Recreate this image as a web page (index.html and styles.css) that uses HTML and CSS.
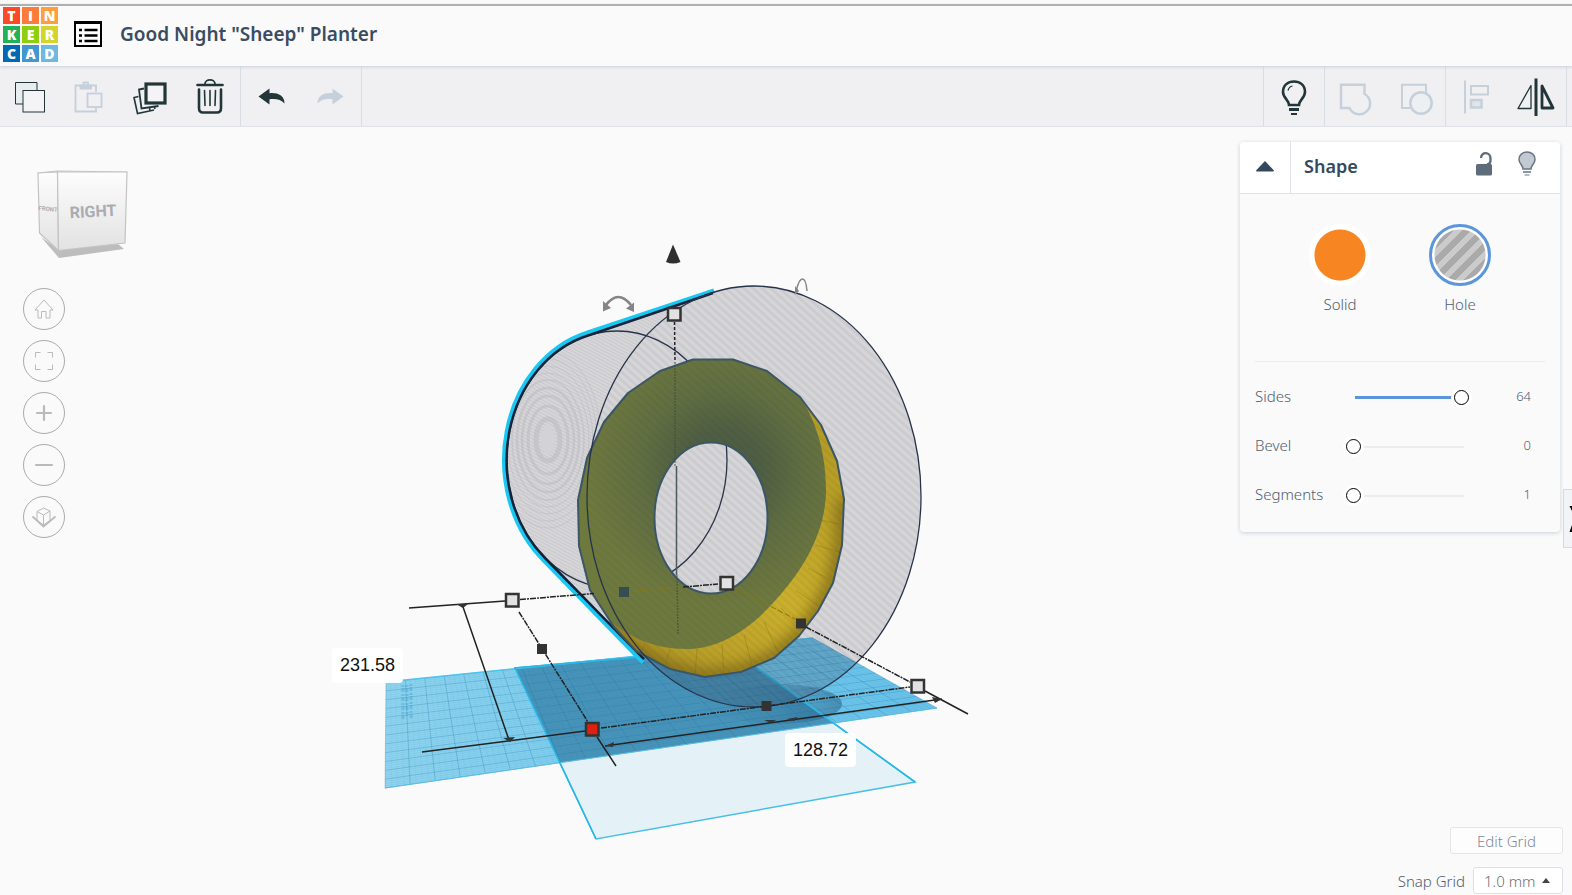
FILE: index.html
```html
<!DOCTYPE html>
<html lang="en">
<head>
<meta charset="utf-8">
<title>Good Night "Sheep" Planter</title>
<link rel="stylesheet" href="styles.css">
</head>
<body>
<header class="header">
  <a class="logo" href="#" aria-label="Tinkercad">
    <span class="tile t1">T</span><span class="tile t2">I</span><span class="tile t3">N</span>
    <span class="tile t4">K</span><span class="tile t5">E</span><span class="tile t6">R</span>
    <span class="tile t7">C</span><span class="tile t8">A</span><span class="tile t9">D</span>
  </a>
  <button class="plain list-button" aria-label="Designs">
    <svg width="28" height="26" viewBox="0 0 28 26"><rect x="1" y="1" width="26" height="24" fill="#fff" stroke="#000" stroke-width="2"/><path d="M0 1.5h28" stroke="#000" stroke-width="3"/><path d="M5 9h3M5 14.500h3M5 20h3M10.500 9h13M10.500 14.500h13M10.500 20h13" stroke="#000" stroke-width="2.500"/></svg>
  </button>
  <h1 class="title">Good Night "Sheep" Planter</h1>
</header>

<nav class="toolbar" aria-label="Tools">
  <div class="group">
    <button class="plain tool" aria-label="Copy"><svg viewBox="0 0 60 60"><path d="M23 36H15.500V14.500H37V22.500" fill="#e8edf0"/><rect x="23" y="22.500" width="21.500" height="21.500" fill="#f4f4f6"/></svg></button>
    <button class="plain tool off" aria-label="Paste"><svg viewBox="0 0 60 60" stroke-width="1.800"><path d="M36 24V17.500H15.500V43.500H36V39"/><path d="M20.500 17.500h10.500v3h-10.500z" fill="#c5d0da"/><rect x="23.500" y="14.500" width="4.500" height="4"/><rect x="27.500" y="25.500" width="14" height="13.500" fill="#f0f0f3"/></svg></button>
    <button class="plain tool" aria-label="Duplicate"><svg viewBox="0 0 60 60"><rect x="26" y="16" width="19" height="19" stroke-width="3.200" fill="#f4f4f6"/><path d="M24 20.500L19 21.500L21.500 40.500L38.500 38" stroke-width="1.800"/><path d="M18.500 28.500L14 29.500L17.500 45.500L34 42M35 41l-.5-2M30 43l-.5-3" stroke-width="1.600"/></svg></button>
    <button class="plain tool" aria-label="Delete"><svg viewBox="0 0 60 60" stroke-width="2.200" stroke-linecap="round"><path d="M17.500 17H42.500" stroke-width="2.600"/><path d="M25 16C25 10.500 35 10.500 35 16" stroke-width="1.800"/><path d="M19 21.500V40Q19 44.500 23 44.500H37Q41 44.500 41 40V21.500" stroke-width="2.600"/><path d="M24.500 22.500L25 37.500M30 22.500V37.500M35.500 22.500L35 37.500" stroke-width="1.600"/></svg></button>
  </div>
  <div class="group">
    <button class="plain tool" aria-label="Undo"><svg viewBox="0 0 60 60"><path d="M17.500 28.500L28.500 20.500V25.200C37 24.500 43.500 27.500 43.500 35.500C40 31.500 35 30.500 28.500 31.300V36.500Z" fill="#223538" stroke="none"/></svg></button>
    <button class="plain tool off" aria-label="Redo"><svg viewBox="0 0 60 60"><path d="M42.500 28.500L31.500 20.500V25.200C23 24.500 16.500 27.500 16.500 35.500C20 31.500 25 30.500 31.500 31.300V36.500Z" fill="#c5d0da" stroke="none"/></svg></button>
  </div>
  <div class="spacer"></div>
  <div class="group">
    <button class="plain tool" aria-label="Show all"><svg viewBox="0 0 60 60"><path d="M25 37C25 32 19 30 19 24C19 17 24 13.500 30 13.500S41 17 41 24C41 30 35 32 35 37Z" stroke-width="2.600"/><path d="M24 22.500Q25 18.500 28.500 18" stroke-width="1.200"/><path d="M25 41.500H35" stroke-width="3"/><path d="M27 46H33" stroke-width="2"/></svg></button>
  </div>
  <div class="group">
    <button class="plain tool off" aria-label="Group"><svg viewBox="0 0 60 60"><path d="M16 16.800H39.500V26A10.800 10.800 0 1 1 24.500 40H16Z" stroke-width="2.500"/></svg></button>
    <button class="plain tool off" aria-label="Ungroup"><svg viewBox="0 0 60 60"><path d="M25 40H17V16.800H41V25" stroke-width="2"/><circle cx="36" cy="35" r="10.700" stroke-width="2.500" fill="#edf0f3"/></svg></button>
  </div>
  <div class="group">
    <button class="plain tool off" aria-label="Align"><svg viewBox="0 0 60 60" stroke-width="2"><path d="M19 12.500V45.500"/><rect x="25" y="18" width="17" height="8.500"/><rect x="25" y="32" width="10.500" height="7.500" fill="#dfe5ea" stroke-width="2.500"/></svg></button>
    <button class="plain tool" aria-label="Mirror"><svg viewBox="0 0 60 60" stroke-linejoin="round"><path d="M30 10.500V48" stroke-width="3"/><path d="M25 17.500V40.500H12Z" stroke-width="1.300"/><path d="M36 18V40H47Z" stroke-width="2.800"/></svg></button>
  </div>
</nav>

<main class="workspace">
  <svg class="scene" viewBox="0 127 1572 768" preserveAspectRatio="xMidYMin meet">
    <defs>
      <pattern id="hatch" width="6" height="6" patternUnits="userSpaceOnUse" patternTransform="rotate(-48)"><rect width="3" height="6" fill="#30303c" opacity=".06"/></pattern>
      <pattern id="fine" width="3" height="3" patternUnits="userSpaceOnUse" patternTransform="rotate(-62)"><rect width="1" height="3" fill="#30303c" opacity=".08"/></pattern>
      <linearGradient id="sea" x1="0" x2="1"><stop offset="0" stop-color="#8fd4ef"/><stop offset=".5" stop-color="#76cbed"/><stop offset="1" stop-color="#69c3ea"/></linearGradient>
      <linearGradient id="shade"><stop offset="0" stop-color="#22577c" stop-opacity="0"/><stop offset=".5" stop-color="#22577c" stop-opacity=".15"/><stop offset="1" stop-color="#22577c" stop-opacity=".5"/></linearGradient>
      <radialGradient id="olive" gradientUnits="userSpaceOnUse" cx="722" cy="470" r="135"><stop offset="0" stop-color="#4a5a42"/><stop offset=".3" stop-color="#4f5f42"/><stop offset=".6" stop-color="#606e41"/><stop offset="1" stop-color="#6e793e"/></radialGradient>
      <linearGradient id="gold" gradientUnits="userSpaceOnUse" x1="830" y1="450" x2="640" y2="670"><stop offset="0" stop-color="#b59c25"/><stop offset=".5" stop-color="#ccb02b"/><stop offset="1" stop-color="#b09625"/></linearGradient>
      <linearGradient id="cube" x2="0" y2="1"><stop offset="0" stop-color="#fdfdfd"/><stop offset="1" stop-color="#e2e2e2"/></linearGradient>
      <clipPath id="plane"><path d="M386 682L813 638L937 708L385 788Z"/></clipPath>
      <clipPath id="ring"><path d="M693 359.500L733 359.500L767 371L800 397L821 425L837 461L844 499L842 545L833 583L818 611L799 636L774 658L741 672L705 677L670 669L636 651L614 627L590 590L579 546L578 500L587 458L604 422L628 393L660 371Z"/></clipPath>
      <clipPath id="barrel"><path d="M713 292L588 335.500A110 129 0 0 0 545 558L650 661A167 210 0 0 1 587 497C587 400 640 320 713 292Z"/></clipPath>
      <filter id="soft" x="-20%" y="-20%" width="140%" height="140%"><feGaussianBlur stdDeviation="7"/></filter>
    </defs>

    <!-- work plane -->
    <path d="M515 668L730 648L915 782L596 839Z" fill="#e4f1f7" stroke="#48bfe6" stroke-width="1.500"/>
    <path d="M386 682L813 638L937 708L385 788Z" fill="url(#sea)"/>
    <g clip-path="url(#plane)">
      <path d="M515 668L730 648L915 782L596 839Z" fill="#4894ba"/>
      <ellipse cx="778" cy="704" rx="64" ry="20" fill="url(#shade)"/>
    </g>
    <g id="grid" fill="none" stroke="#17699c"></g>
    <path d="M386 682L813 638" stroke="#4bc4ec" stroke-width="1.500"/>
    <path d="M385 788L937 708" stroke="#58bde3" stroke-width="1"/>
    <path d="M640 657L515 668L596 839M757 668L915 782" fill="none" stroke="#27b7e8" stroke-width="1.600"/>
    <path d="M403 685v35M407 685v31M411 684v35" stroke="#3f9fce" stroke-width="3" stroke-dasharray="2 1 4 2" opacity=".4"/>

    <!-- cylinder body -->
    <path d="M713 292L588 335.500A110 129 0 0 0 545 558L650 661A167 210.500 0 1 0 713 292Z" fill="#302e3c" opacity=".18"/>
    <g clip-path="url(#barrel)">
      <rect x="500" y="280" width="215" height="385" fill="url(#fine)"/>
      <g fill="none" stroke="#b9b9bd" stroke-width="2.500" opacity=".5">
        <ellipse cx="548" cy="440" rx="12" ry="21" stroke-width="5"/><ellipse cx="548" cy="440" rx="20" ry="34" stroke-width="3"/><ellipse cx="548" cy="440" rx="26" ry="44"/><ellipse cx="548" cy="440" rx="31" ry="52"/><ellipse cx="548" cy="440" rx="36" ry="60" stroke-width="1.500"/><ellipse cx="548" cy="440" rx="41" ry="67" stroke-width="1"/><ellipse cx="548" cy="440" rx="45" ry="74" stroke-width="1"/><ellipse cx="548" cy="440" rx="49" ry="81" stroke-width="1"/><ellipse cx="548" cy="440" rx="53" ry="88" stroke-width="1"/>
      </g>
      <ellipse cx="548" cy="440" rx="7" ry="14" fill="#d3d3d6"/>
    </g>
    <ellipse cx="617" cy="460" rx="110" ry="129" fill="none" stroke="#26344a" stroke-width="1.300"/>
    <path d="M714 290.500L587 332.700A113 132 0 0 0 543.300 560L643 662.500" fill="none" stroke="#19c8f2" stroke-width="4"/>
    <path d="M713 293L588 335.500A110 129 0 0 0 545 558L644 659" fill="none" stroke="#12243c" stroke-width="2.500"/>
    <path d="M587 480A167 210.500 0 0 1 713 292A167 210.500 0 1 1 587 515Z" fill="url(#hatch)"/>

    <!-- torus -->
    <path fill-rule="evenodd" fill="url(#gold)" d="M693 359.500L733 359.500L767 371L800 397L821 425L837 461L844 499L842 545L833 583L818 611L799 636L774 658L741 672L705 677L670 669L636 651L614 627L590 590L579 546L578 500L587 458L604 422L628 393L660 371ZM654.500 518A56.500 75.500 0 1 0 767.500 518A56.500 75.500 0 1 0 654.500 518Z"/>
    <g clip-path="url(#ring)">
      <path d="M844 499L842 545L833 583L818 611L799 636L774 658L741 672L705 677L670 669L636 651L600 620" fill="none" stroke="#6f5c18" stroke-width="14" filter="url(#soft)" opacity=".7"/>
      <path d="M820 520l24 5M816 545l26 8M808 568l24 13M796 590l22 16M781 608l20 20M764 622l14 30M744 635l8 30M722 644l2 31M697 649l-2 27M670 649l-6 20M645 644l-7 15" stroke="#7f6b18" stroke-width="1" opacity=".35"/>
      <path fill-rule="evenodd" fill="url(#olive)" d="M800 397C817 422 826 455 826 490C826 532 803 571 773 603C747 632 717 649 686 649C655 649 630 638 609 620L570 580V340H800ZM654.500 518A56.500 75.500 0 1 0 767.500 518A56.500 75.500 0 1 0 654.500 518Z"/>
      <path fill-rule="evenodd" d="M587 480A167 210.500 0 0 1 713 292A167 210.500 0 1 1 587 515ZM654.500 518A56.500 75.500 0 1 0 767.500 518A56.500 75.500 0 1 0 654.500 518Z" fill="url(#hatch)"/>
    </g>
    <g fill="none" stroke="#3b5666" stroke-width="2" stroke-linejoin="round">
      <path d="M693 359.500L733 359.500L767 371L800 397L821 425L837 461L844 499L842 545L833 583L818 611L799 636L774 658L741 672L705 677L670 669L636 651L614 627L590 590L579 546L578 500L587 458L604 422L628 393L660 371Z"/>
      <ellipse cx="711" cy="518" rx="56.500" ry="75.500"/>
    </g>
    <ellipse cx="754" cy="496.500" rx="167" ry="210.500" fill="none" stroke="#26344a" stroke-width="1.300"/>

    <!-- dimension guides -->
    <g fill="none" stroke="#222" stroke-width="1.500">
      <path d="M409 608L505 601M422 752L585 731M462 604L509 740M597 737L616 766M925 691L968 714M605 746L942 699"/>
      <path d="M520 599.500L594 593.500M519 612L588 722M601 728L910 687M806 627L910 682M683 587L718 584" stroke-dasharray="6 1 2 1"/>
      <path d="M674.500 322L675 362" stroke-dasharray="3 2"/>
      <path d="M676.500 466V575" stroke="#4b5b5b"/><path d="M675 362V466M677 575L678 635" stroke="#3d4d35" stroke-dasharray="2 1" opacity=".6"/>
      <path d="M630 592L680 587M735 588L797 620" stroke="#877810" stroke-width="1" stroke-dasharray="6 2"/>
    </g>
    <path d="M456 604l12 0l-5 4ZM503 738l12-1l-5 5ZM605 746l9-4l-1 5ZM942 699l-10-2l3 6ZM764 720h12l-5 3ZM787 719l11-2l-4 4Z" fill="#333"/>
    <g fill="#333"><path d="M537 644h10v10h-10zM796 618.500h10v10h-10zM761.500 701h10v10h-10z"/><path d="M619 587h10v10h-10z" fill="#374e50"/></g>
    <g fill="#e2e2e2" stroke="#333" stroke-width="2.500">
      <rect x="506" y="594" width="12.500" height="12.500"/><rect x="668" y="308" width="12.500" height="12.500"/><rect x="720.500" y="577" width="12.500" height="12.500"/><rect x="911.500" y="680" width="12.500" height="12.500"/><rect x="586" y="723" width="12.500" height="12.500" fill="#e0200f"/>
    </g>
    <path d="M673 244.500L680.500 262Q673 265 666 262Z" fill="#303030"/>
    <g fill="none" stroke="#858585" stroke-width="2.500"><path d="M606 305Q618 289 631 305"/><path d="M796.500 290Q799 279 802.500 279T807 291" stroke-width="1.500"/></g>
    <path d="M603 301V311.500L611 308ZM634 302.500V312L626 308.500ZM795 286V295L799 291Z" fill="#858585"/>

    <!-- view cube -->
    <path d="M41 237L59 250L118 244L124 249L59 258Z" fill="#bdbdbd"/>
    <g stroke="#c3c3c3" stroke-width="1.200" stroke-linejoin="round"><path d="M38 173L57 171L127 172L57.500 173Z" fill="#fff"/><path d="M38 173L57.500 172L58.500 250.500L39.500 233Z" fill="url(#cube)"/><path d="M57.500 172L127 172L125 243L58.500 250.500Z" fill="url(#cube)"/></g>
    <text class="cube-text" x="93" y="217" text-anchor="middle" transform="rotate(-3 93 211)">RIGHT</text>
    <text class="cube-side" x="48" y="211" text-anchor="middle" transform="rotate(6 48 210)">FRONT</text>

    <foreignObject x="332" y="648" width="71" height="35"><input class="dimension" aria-label="Width" value="231.58"></foreignObject>
    <foreignObject x="785" y="733" width="71" height="34"><input class="dimension" aria-label="Length" value="128.72"></foreignObject>
  </svg>

  <div class="view-controls">
    <button class="plain round" aria-label="Home view"><svg width="24" height="24" viewBox="0 0 24 24"><path d="M12 3L3 13H6V21H9.500V14.500H14V21H18V13H21Z"/></svg></button>
    <button class="plain round" aria-label="Fit view"><svg width="24" height="24" viewBox="0 0 24 24"><path d="M3.500 8.500V3.500H8.500M15.500 3.500H20.500V8.500M20.500 15.500V20.500H15.500M8.500 20.500H3.500V15.500"/></svg></button>
    <button class="plain round" aria-label="Zoom in"><svg width="24" height="24" viewBox="0 0 24 24" stroke-width="2.200" stroke-linecap="round"><path d="M12 5V19M5 12H19"/></svg></button>
    <button class="plain round" aria-label="Zoom out"><svg width="24" height="24" viewBox="0 0 24 24" stroke-width="2.200" stroke-linecap="round"><path d="M4 12H20"/></svg></button>
    <button class="plain round" aria-label="Perspective"><svg width="24" height="24" viewBox="0 0 24 24"><path d="M5 6.500L11.500 3L18 6V15.500L11.500 20L5 15.500ZM5 6.500L11.500 10L18 6M11.500 10V20"/><path d="M.5 11.500L11.500 21.500L23.500 11.500" stroke-width="1.800"/></svg></button>
  </div>

  <section class="panel" aria-label="Shape">
    <div class="panel-head">
      <button class="plain collapse" aria-label="Collapse"><svg width="20" height="12" viewBox="0 0 20 12"><path d="M1 10.500L10 1L19 10.500Q19 11.500 18 11.500H2Q1 11.500 1 10.500Z" fill="#34495e"/></svg></button>
      <h2 class="panel-title">Shape</h2>
      <button class="plain head-icon" aria-label="Lock"><svg width="18" height="24" viewBox="0 0 18 24"><rect x="1" y="12" width="16" height="11.500" rx="1.500" fill="#5d6b7a"/><path d="M6 6C6 -.5 15.500 -.5 15.500 6.500V8.500Q15.500 12 12 12.500" fill="none" stroke="#5d6b7a" stroke-width="2.300"/></svg></button>
      <button class="plain head-icon" aria-label="Hide"><svg width="18" height="26" viewBox="0 0 18 26"><path d="M5 18C5 14 1 13 1 8.500C1 3.500 5 1 9 1S17 3.500 17 8.500C17 13 13 14 13 18Z" fill="#c3c9d1" stroke="#66768a" stroke-width="1.500"/><path d="M5 21H13" stroke="#8995a3" stroke-width="2"/><path d="M6.500 24H11.500" stroke="#b4bcc6" stroke-width="2"/></svg></button>
    </div>
    <div class="materials">
      <button class="plain material"><span class="swatch solid"></span>Solid</button>
      <button class="plain material"><span class="swatch hole"></span>Hole</button>
    </div>
    <div class="params">
      <div class="param"><label for="sides">Sides</label><input class="slider filled" id="sides" type="range" min="3" max="64" value="64"><output for="sides">64</output></div>
      <div class="param"><label for="bevel">Bevel</label><input class="slider" id="bevel" type="range" min="0" max="10" value="0"><output for="bevel">0</output></div>
      <div class="param"><label for="segments">Segments</label><input class="slider" id="segments" type="range" min="1" max="10" value="1"><output for="segments">1</output></div>
    </div>
  </section>

  <button class="plain drawer" aria-label="Open shapes panel"><svg width="8" height="28" viewBox="0 0 8 28"><path d="M5.500 1H8V6ZM8 20V27H5.500Z" fill="#000"/></svg></button>

  <div class="grid-controls">
    <button class="plain edit-grid">Edit Grid</button>
    <div class="snap">
      <label for="snap">Snap Grid</label>
      <span class="select-wrap"><select id="snap"><option>1.0 mm</option></select><svg width="8" height="5" viewBox="0 0 8 5"><path d="M0 5L4 0L8 5Z" fill="#444"/></svg></span>
    </div>
  </div>
</main>
<script src="scene.js"></script>
</body>
</html>
```
FILE: styles.css
```css
* { box-sizing: border-box; }

body {
  margin: 0;
  min-height: 100vh;
  display: flex;
  flex-direction: column;
  padding-top: 4px;
  background: #fafafa;
  color: #4e6074;
  font-family: "Noto Sans", "Open Sans", sans-serif;
  font-size: 14px;
  font-weight: 300;
  overflow: hidden;
}

.plain {
  padding: 0;
  border: 0;
  background: none;
  color: inherit;
  font: inherit;
  cursor: pointer;
}

svg { display: block; }

.header {
  display: flex;
  align-items: center;
  height: 62px;
  padding: 0 0 4px 3px;
  border-top: 2px solid #b0b0b0;
  background: #fafafa;
  box-shadow: 0 1px 3px #c9cddb;
  position: relative;
}

.logo {
  display: grid;
  grid-template-columns: repeat(3, 17px);
  grid-auto-rows: 17px;
  gap: 2px;
  text-decoration: none;
}

.tile {
  display: grid;
  place-items: center;
  color: #fff;
  font: 800 14px/17px "Open Sans", sans-serif;
}
.t1 { background: #fb4a28; }
.t2 { background: #ff7b3a; }
.t3 { background: #ff9e3d; }
.t4 { background: #22b157; }
.t5 { background: #8fce0e; }
.t6 { background: #d4d42e; }
.t7 { background: #0068b5; }
.t8 { background: #4297cf; }
.t9 { background: #6db9e1; }

.list-button { margin: 0 18px 0 16px; }

.title {
  margin: 0;
  color: #3a4c62;
  font-size: 19px;
  font-weight: 600;
}

.toolbar {
  display: flex;
  height: 61px;
  padding-right: 5px;
  border-bottom: 1px solid #dfe2e8;
  background: #f0f0f3;
}

.group {
  display: flex;
  border-right: 1px solid #d9dde4;
}

.spacer {
  flex: 1;
  border-right: 1px solid #d9dde4;
}

.tool {
  width: 60px;
  height: 60px;
  padding-top: 2px;
}

.tool svg {
  width: 60px;
  height: 60px;
  fill: none;
  stroke: #223538;
}
.off svg { stroke: #c5d0da; }

.workspace {
  position: relative;
  flex: 1;
  display: flex;
  justify-content: space-between;
  align-items: flex-start;
  overflow: hidden;
}

.scene {
  position: absolute;
  inset: 0;
  width: 100%;
  height: 100%;
}

.cube-text {
  font: 700 16px Roboto, sans-serif;
  fill: #a9acb2;
}

.cube-side {
  font: 700 6px Roboto, sans-serif;
  fill: #a9acb2;
}

.dimension {
  display: block;
  width: 100%;
  height: 100%;
  padding: 0;
  border: 0;
  border-radius: 4px;
  background: #fffffff0;
  color: #111;
  font: 18px "Liberation Sans", sans-serif;
  text-align: center;
}

.view-controls {
  position: relative;
  display: grid;
  gap: 10px;
  padding: 161px 0 0 23px;
}

.round {
  display: grid;
  place-items: center;
  width: 42px;
  height: 42px;
  border: 1px solid #a9abb2;
  border-radius: 50%;
}

.round svg {
  fill: none;
  stroke: #bababa;
}

.panel {
  position: relative;
  width: 320px;
  margin: 15px 12px 0 0;
  border-radius: 4px;
  background: #fafafa;
  box-shadow: 0 1px 4px #c5d0da;
}

.panel-head {
  display: flex;
  align-items: center;
  gap: 25px;
  height: 52px;
  padding-right: 24px;
  border-bottom: 1px solid #dfe2e8;
  border-radius: 4px 4px 0 0;
  background: #fff;
}

.head-icon { padding-bottom: 8px; }

.collapse {
  display: grid;
  place-items: center;
  width: 51px;
  height: 51px;
  padding-bottom: 4px;
  border-right: 1px solid #dfe2e8;
}

.panel-title {
  flex: 1;
  margin: 0 0 0 -12px;
  padding-bottom: 4px;
  color: #34495e;
  font-size: 18px;
  font-weight: 600;
}

.materials {
  display: flex;
  justify-content: center;
  align-items: flex-start;
  gap: 58px;
  height: 168px;
  margin: 0 15px;
  padding-top: 30px;
  border-bottom: 1px solid #ebebeb;
}

.material {
  display: flex;
  flex-direction: column;
  align-items: center;
  gap: 7px;
  width: 62px;
  font-size: 15px;
  line-height: 22px;
}

.swatch {
  width: 62px;
  height: 62px;
  padding: 3px;
  border: 3px solid #fff;
  border-radius: 50%;
  background-color: #fff;
}
.solid { background: radial-gradient(circle, #f78522 25px, #fff 26px); }
.hole {
  border-color: #5b95db;
  background:
    radial-gradient(circle, transparent 25px, #fff 26px),
    repeating-linear-gradient(135deg, #aaa 0 6px, #cbcbcb 6px 12px);
}

.params {
  display: grid;
  padding: 11px 29px 12px 15px;
}

.param {
  display: grid;
  grid-template-columns: 91px 123px 1fr;
  align-items: center;
  height: 49px;
  font-size: 15px;
}

.param label,
.param output { padding-bottom: 4px; }

.param output {
  font-size: 13px;
  text-align: right;
}

.slider {
  appearance: none;
  width: 100%;
  height: 15px;
  margin: 0;
  background: linear-gradient(#ececec, #ececec) 9px center / 109px 2px no-repeat;
}

.filled { background: linear-gradient(#5b95db, #5b95db) 9px center / 109px 3px no-repeat; }

.slider::-webkit-slider-thumb {
  appearance: none;
  width: 15px;
  height: 15px;
  border: 1px solid #000;
  border-radius: 50%;
  background: #fff;
  box-shadow: 0 0 0 3px #fff;
}

.drawer {
  position: absolute;
  right: 0;
  top: 362px;
  width: 9px;
  height: 59px;
  border: 1px solid #d5d9e0;
  border-right: 0;
  background: #f2f3f7;
}

.grid-controls {
  position: absolute;
  right: 9px;
  bottom: 1px;
  display: grid;
  justify-items: end;
  gap: 13px;
  font-size: 15px;
}

.edit-grid {
  width: 113px;
  height: 27px;
  border: 1px solid #e3e5e8;
  border-radius: 3px;
  background: #fdfdfd;
  color: #7d8a9b;
}

.snap {
  display: flex;
  align-items: center;
  gap: 8px;
}

.select-wrap {
  display: grid;
  align-items: center;
}

.select-wrap > * { grid-area: 1 / 1; }

.select-wrap svg {
  justify-self: end;
  margin-right: 13px;
  pointer-events: none;
}

.snap select {
  appearance: none;
  width: 90px;
  height: 27px;
  padding: 0 10px;
  border: 1px solid #dde0e8;
  border-radius: 3px;
  background: #fff;
  color: #707070;
  font: inherit;
}
```
FILE: scene.js
```js
// Draws the work plane grid lines between the four projected corners.
const corners = [[386, 682], [813, 638], [937, 708], [385, 788]];
const grid = document.getElementById('grid');
const mix = (a, b, t) => [a[0] + (b[0] - a[0]) * t, a[1] + (b[1] - a[1]) * t];

function addLine(from, to, opacity) {
  const line = document.createElementNS('http://www.w3.org/2000/svg', 'path');
  line.setAttribute('d', `M${from}L${to}`);
  line.setAttribute('stroke-width', '1');
  line.setAttribute('opacity', opacity);
  grid.append(line);
}

const [tl, tr, br, bl] = corners;
for (let i = 0; i <= 88; i++) {
  addLine(mix(tl, tr, i / 88), mix(bl, br, i / 88), i % 4 ? 0.04 : 0.25);
}
for (let i = 0; i <= 48; i++) {
  addLine(mix(tl, bl, i / 48), mix(tr, br, i / 48), i % 4 ? 0.06 : 0.25);
}
```
